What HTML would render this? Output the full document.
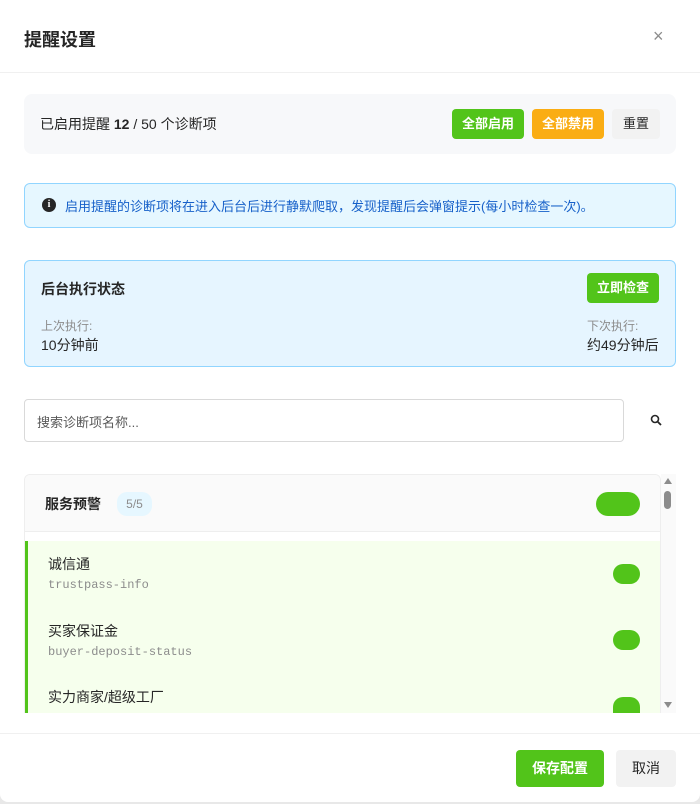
<!DOCTYPE html>
<html><head><meta charset="utf-8"><style>
*{box-sizing:border-box;margin:0;padding:0}
body{width:700px;height:804px;background:#e8e8e8;font-family:"Liberation Sans","Noto Sans CJK SC",sans-serif;color:#262626;position:relative;overflow:hidden}
.dlg{position:absolute;left:0;top:0;width:700px;height:802px;background:#fff;border-radius:0 0 8px 8px}
.a{position:absolute}
.btn{position:absolute;border-radius:4px;color:#fff;font-size:13px;font-weight:bold;display:flex;align-items:center;justify-content:center;padding-bottom:1px;line-height:1}
.tg{position:absolute;background:#52c41a;border-radius:14px}
.name{position:absolute;left:48px;font-size:14px;color:#262626}
.code{position:absolute;left:48px;font-family:"Liberation Mono",monospace;font-size:12px;color:#8c8c8c}
</style></head><body><div class="dlg">
<div class="a" style="left:24px;top:26px;font-size:18px;font-weight:bold">提醒设置</div>
<div class="a" style="left:653px;top:26px;font-size:18px;color:#8c8c8c">×</div>
<div class="a" style="left:0;top:72px;width:700px;height:1px;background:#f0f0f0"></div>

<div class="a" style="left:24px;top:94px;width:652px;height:60px;background:#f7f8fa;border-radius:8px"></div>
<div class="a" style="left:40px;top:114px;font-size:14px">已启用提醒 <b>12</b> / 50 个诊断项</div>
<div class="btn" style="left:452px;top:109px;width:72px;height:30px;background:#52c41a">全部启用</div>
<div class="btn" style="left:532px;top:109px;width:72px;height:30px;background:#faad14">全部禁用</div>
<div class="btn" style="left:612px;top:109px;width:48px;height:30px;background:#f2f2f2;color:#262626;font-weight:normal">重置</div>

<div class="a" style="left:24px;top:183px;width:652px;height:45px;background:#e6f7ff;border:1px solid #91d5ff;border-radius:6px"></div>
<div class="a" style="left:42px;top:198px;width:14px;height:14px;border-radius:50%;background:#262626;color:#fff;font-size:10px;font-weight:bold;text-align:center;line-height:14px;font-family:'Liberation Serif',serif">i</div>
<div class="a" style="left:65px;top:196px;font-size:13px;color:#1660c9">启用提醒的诊断项将在进入后台后进行静默爬取，发现提醒后会弹窗提示(每小时检查一次)。</div>

<div class="a" style="left:24px;top:260px;width:652px;height:107px;background:#e6f5ff;border:1px solid #91d5ff;border-radius:6px"></div>
<div class="a" style="left:41px;top:279px;font-size:14px;font-weight:bold">后台执行状态</div>
<div class="btn" style="left:587px;top:273px;width:72px;height:30px;background:#52c41a">立即检查</div>
<div class="a" style="left:41px;top:317px;font-size:12px;color:#8c8c8c">上次执行:</div>
<div class="a" style="left:41px;top:335px;font-size:14px">10分钟前</div>
<div class="a" style="left:587px;top:317px;font-size:12px;color:#8c8c8c">下次执行:</div>
<div class="a" style="left:587px;top:335px;font-size:14px">约49分钟后</div>

<div class="a" style="left:24px;top:399px;width:600px;height:43px;border:1px solid #d9d9d9;border-radius:4px"></div>
<div class="a" style="left:37px;top:412px;font-size:13px;color:#595959">搜索诊断项名称...</div>
<svg class="a" style="left:650px;top:414px" width="13" height="13" viewBox="0 0 13 13"><circle cx="5" cy="5" r="3.5" fill="none" stroke="#262626" stroke-width="1.6"/><path d="M7.6 7.6L11 11" stroke="#262626" stroke-width="1.8"/></svg>

<div class="a" style="left:24px;top:474px;width:637px;height:239px;border:1px solid #eee;border-bottom:none;border-radius:6px 6px 0 0;overflow:hidden;background:#fff">
 <div class="a" style="left:0;top:0;width:637px;height:57px;background:#fafafa;border-bottom:1px solid #eee"></div>
 <div class="a" style="left:20px;top:19px;font-size:14px;font-weight:bold">服务预警</div>
 <div class="a" style="left:92px;top:17px;width:35px;height:24px;background:#e6f7ff;border-radius:10px;font-size:12px;color:#8c8c8c;text-align:center;line-height:24px">5/5</div>
 <div class="tg" style="left:571px;top:17px;width:44px;height:24px;border-radius:12px"></div>
 <div class="a" style="left:0;top:66px;width:637px;height:180px;background:#f6ffed;border-left:3px solid #52c41a"></div>
</div>
<div class="name" style="top:554px">诚信通</div>
<div class="code" style="top:578px">trustpass-info</div>
<div class="tg" style="left:613px;top:564px;width:27px;height:20px;border-radius:10px"></div>
<div class="name" style="top:621px">买家保证金</div>
<div class="code" style="top:645px">buyer-deposit-status</div>
<div class="tg" style="left:613px;top:630px;width:27px;height:20px;border-radius:10px"></div>
<div class="name" style="top:687px">实力商家/超级工厂</div>
<div class="tg" style="left:613px;top:697px;width:27px;height:16px;border-radius:10px 10px 0 0"></div>
<div class="a" style="left:661px;top:474px;width:15px;height:239px;background:#fafafa"></div>
<div class="a" style="left:664px;top:478px;width:0;height:0;border-left:4px solid transparent;border-right:4px solid transparent;border-bottom:6px solid #8c8c8c"></div>
<div class="a" style="left:664px;top:491px;width:7px;height:18px;background:#8c8c8c;border-radius:4px"></div>
<div class="a" style="left:664px;top:702px;width:0;height:0;border-left:4px solid transparent;border-right:4px solid transparent;border-top:6px solid #8c8c8c"></div>

<div class="a" style="left:0;top:733px;width:700px;height:1px;background:#f0f0f0"></div>
<div class="btn" style="left:516px;top:750px;width:88px;height:37px;background:#52c41a;font-size:14px">保存配置</div>
<div class="btn" style="left:616px;top:750px;width:60px;height:37px;background:#f2f2f2;color:#262626;font-weight:normal;font-size:14px">取消</div>
</div></body></html>
